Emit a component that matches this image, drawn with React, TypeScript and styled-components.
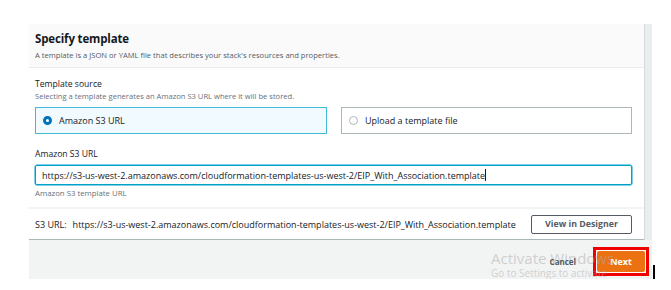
import React from 'react';
import styled, { createGlobalStyle, css } from 'styled-components';

const templateUrl =
  'https://s3-us-west-2.amazonaws.com/cloudformation-templates-us-west-2/EIP_With_Association.template';

const GlobalStyle = createGlobalStyle`
  html, body {
    margin: 0;
    padding: 0;
    background: #ffffff;
  }
  body {
    font-family: "Open Sans", "Liberation Sans", sans-serif;
    color: #16191f;
  }
`;

export default function App() {
  return (
    <>
      <GlobalStyle />
      <Frame>
        <Top>
          <Panel>
            <PanelHeader>
              <Title>Specify template</Title>
              <Subtitle>
                A template is a JSON or YAML file that describes your stack's
                resources and properties.
              </Subtitle>
            </PanelHeader>
            <PanelBody>
              <Label>Template source</Label>
              <Hint>
                Selecting a template generates an Amazon S3 URL where it will be
                stored.
              </Hint>
              <Tiles>
                <Tile selected>
                  <Radio selected />
                  Amazon S3 URL
                </Tile>
                <Tile>
                  <Radio />
                  Upload a template file
                </Tile>
              </Tiles>
              <Label spaced>Amazon S3 URL</Label>
              <UrlInput>
                {templateUrl}
                <Caret />
              </UrlInput>
              <Help>Amazon S3 template URL</Help>
            </PanelBody>
            <UrlRow>
              <UrlText>
                <span>S3 URL:</span>
                {templateUrl}
              </UrlText>
              <OutlineButton>View in Designer</OutlineButton>
            </UrlRow>
          </Panel>
          <Scroll />
        </Top>
        <Footer>
          <Cancel>Cancel</Cancel>
          <Highlight>
            <Primary>Next</Primary>
          </Highlight>
          <Watermark>
            <strong>Activate Windows</strong>
            <span>Go to Settings to activate Windows.</span>
          </Watermark>
        </Footer>
        <Cursor />
      </Frame>
    </>
  );
}

const Frame = styled.div`
  position: relative;
  width: 623px;
  margin: 24px 0 0 29px;
`;

const Top = styled.div`
  display: flex;
`;

const Panel = styled.section`
  width: 615px;
  background: #ffffff;
  border-bottom: 1px solid #aab7b8;
`;

const Scroll = styled.div`
  flex: 1;
  background: #eaeded;
  border-left: 1px solid #d5dbdb;
`;

const PanelHeader = styled.header`
  height: 44px;
  padding: 5px 6px 0;
  box-sizing: border-box;
  background: #fafafa;
  border-bottom: 1px solid #eaeded;
`;

const Title = styled.h2`
  margin: 0;
  font-size: 11.5px;
  line-height: 20px;
  font-weight: 700;
  letter-spacing: -0.15px;
  color: #16191f;
`;

const Subtitle = styled.p`
  margin: 1px 0 0;
  font-size: 7.6px;
  line-height: 11px;
  color: #545b64;
`;

const PanelBody = styled.div`
  padding: 10px 12px 9px 6px;
  border-bottom: 2px solid #f2f3f3;
`;

const Label = styled.div<{ spaced?: boolean }>`
  font-size: 8.6px;
  line-height: 13px;
  font-weight: 500;
  color: #16191f;
  ${({ spaced }) =>
    spaced &&
    css`
      margin-top: 14px;
    `}
`;

const Hint = styled.div`
  font-size: 7.6px;
  line-height: 10px;
  color: #687078;
`;

const Tiles = styled.div`
  display: grid;
  grid-template-columns: 292px 291px;
  gap: 14px;
  margin-top: 6px;
`;

const Tile = styled.div<{ selected?: boolean }>`
  display: flex;
  align-items: center;
  gap: 7px;
  height: 27px;
  padding-left: 7px;
  box-sizing: border-box;
  font-size: 9px;
  color: #16191f;
  border: 1px solid #aab7b8;
  background: #ffffff;
  ${({ selected }) =>
    selected &&
    css`
      border-color: #44b9d6;
      background: #f1faff;
    `}
`;

const Radio = styled.span<{ selected?: boolean }>`
  width: 9px;
  height: 9px;
  box-sizing: border-box;
  border-radius: 50%;
  border: 1px solid #aab7b8;
  background: #ffffff;
  ${({ selected }) =>
    selected &&
    css`
      border: 3px solid #0073bb;
    `}
`;

const UrlInput = styled.div`
  display: flex;
  align-items: center;
  height: 20px;
  margin-top: 4px;
  padding-left: 6px;
  box-sizing: border-box;
  border: 1px solid #00a1c9;
  border-radius: 2px;
  box-shadow: 0 0 0 0.5px #00a1c9;
  font-size: 9px;
  color: #16191f;
  white-space: nowrap;
`;

const Caret = styled.span`
  width: 1px;
  height: 12px;
  background: #16191f;
`;

const Help = styled.div`
  margin-top: 3px;
  font-size: 7.8px;
  line-height: 10px;
  color: #687078;
`;

const UrlRow = styled.div`
  display: flex;
  align-items: center;
  justify-content: space-between;
  height: 30px;
  padding: 0 12px 0 6px;
`;

const UrlText = styled.div`
  font-size: 9px;
  color: #16191f;
  white-space: nowrap;

  span {
    margin-right: 6px;
  }
`;

const OutlineButton = styled.button`
  width: 101px;
  height: 19px;
  padding: 0;
  background: #ffffff;
  border: 1px solid #545b64;
  border-radius: 2px;
  font-family: inherit;
  font-size: 8.8px;
  font-weight: 700;
  color: #545b64;
`;

const Footer = styled.footer`
  position: relative;
  display: flex;
  align-items: flex-start;
  justify-content: flex-end;
  gap: 17px;
  height: 39px;
  padding: 7px 3px 0 0;
  box-sizing: border-box;
  background: #f2f3f3;
  overflow: hidden;
`;

const Cancel = styled.span`
  position: relative;
  z-index: 1;
  margin-top: 9px;
  font-size: 8px;
  font-weight: 700;
  color: #545b64;
`;

const Highlight = styled.div`
  padding: 1px;
  border: 3px solid #f00000;
  background: #ffffff;
`;

const Primary = styled.button`
  display: block;
  width: 48px;
  height: 21px;
  padding: 0;
  border: none;
  border-radius: 2px;
  background: #ec7211;
  font-family: inherit;
  font-size: 9px;
  font-weight: 700;
  color: #ffffff;
`;

const Watermark = styled.div`
  position: absolute;
  left: 462px;
  top: 10px;
  display: flex;
  flex-direction: column;
  font-family: "Open Sans", sans-serif;
  color: rgba(170, 170, 170, 0.5);
  pointer-events: none;

  strong {
    font-size: 15px;
    line-height: 17px;
    font-weight: 400;
  }

  span {
    font-size: 10px;
    line-height: 13px;
  }
`;

const Cursor = styled.div`
  position: absolute;
  right: -3px;
  bottom: 0;
  width: 2px;
  height: 14px;
  background: #000000;
`;
